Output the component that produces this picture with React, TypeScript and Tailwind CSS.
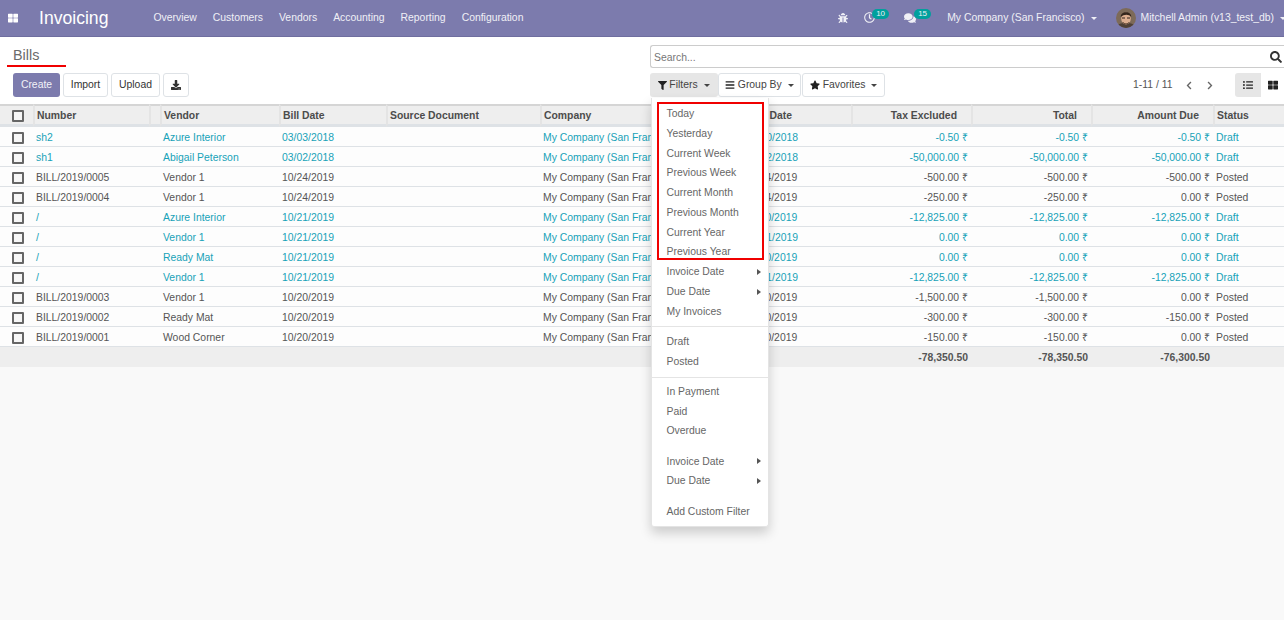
import React from "react";
import {
  FaThLarge,
  FaBug,
  FaRegClock,
  FaComments,
  FaSearch,
  FaDownload,
  FaFilter,
  FaBars,
  FaStar,
  FaChevronLeft,
  FaChevronRight,
  FaListUl,
} from "react-icons/fa";

const navItems = ["Overview", "Customers", "Vendors", "Accounting", "Reporting", "Configuration"];

type Bill = {
  number: string;
  vendor: string;
  billDate: string;
  dueDate: string;
  tax: string;
  total: string;
  due: string;
  status: string;
};

const bills: Bill[] = [
  { number: "sh2", vendor: "Azure Interior", billDate: "03/03/2018", dueDate: "03/30/2018", tax: "-0.50 ₹", total: "-0.50 ₹", due: "-0.50 ₹", status: "Draft" },
  { number: "sh1", vendor: "Abigail Peterson", billDate: "03/02/2018", dueDate: "04/02/2018", tax: "-50,000.00 ₹", total: "-50,000.00 ₹", due: "-50,000.00 ₹", status: "Draft" },
  { number: "BILL/2019/0005", vendor: "Vendor 1", billDate: "10/24/2019", dueDate: "11/24/2019", tax: "-500.00 ₹", total: "-500.00 ₹", due: "-500.00 ₹", status: "Posted" },
  { number: "BILL/2019/0004", vendor: "Vendor 1", billDate: "10/24/2019", dueDate: "11/24/2019", tax: "-250.00 ₹", total: "-250.00 ₹", due: "0.00 ₹", status: "Posted" },
  { number: "/", vendor: "Azure Interior", billDate: "10/21/2019", dueDate: "11/20/2019", tax: "-12,825.00 ₹", total: "-12,825.00 ₹", due: "-12,825.00 ₹", status: "Draft" },
  { number: "/", vendor: "Vendor 1", billDate: "10/21/2019", dueDate: "10/21/2019", tax: "0.00 ₹", total: "0.00 ₹", due: "0.00 ₹", status: "Draft" },
  { number: "/", vendor: "Ready Mat", billDate: "10/21/2019", dueDate: "11/20/2019", tax: "0.00 ₹", total: "0.00 ₹", due: "0.00 ₹", status: "Draft" },
  { number: "/", vendor: "Vendor 1", billDate: "10/21/2019", dueDate: "10/21/2019", tax: "-12,825.00 ₹", total: "-12,825.00 ₹", due: "-12,825.00 ₹", status: "Draft" },
  { number: "BILL/2019/0003", vendor: "Vendor 1", billDate: "10/20/2019", dueDate: "11/20/2019", tax: "-1,500.00 ₹", total: "-1,500.00 ₹", due: "0.00 ₹", status: "Posted" },
  { number: "BILL/2019/0002", vendor: "Ready Mat", billDate: "10/20/2019", dueDate: "11/20/2019", tax: "-300.00 ₹", total: "-300.00 ₹", due: "-150.00 ₹", status: "Posted" },
  { number: "BILL/2019/0001", vendor: "Wood Corner", billDate: "10/20/2019", dueDate: "11/20/2019", tax: "-150.00 ₹", total: "-150.00 ₹", due: "0.00 ₹", status: "Posted" },
];

const Caret = ({ className = "" }: { className?: string }) => (
  <span className={`inline-block w-0 h-0 border-x-[3.5px] border-x-transparent border-t-[3.5px] border-t-current ${className}`} />
);

const Avatar = () => (
  <svg width="20" height="20" viewBox="0 0 20 20" className="block rounded-full shrink-0">
    <rect width="20" height="20" fill="#7d6a58" />
    <path d="M0 20 C1 16 5 15 10 15 C15 15 19 16 20 20 Z" fill="#4f4036" />
    <ellipse cx="10" cy="10.5" rx="4.8" ry="6" fill="#dcae90" />
    <path d="M4.8 9 C4 2.5 16 2.5 15.2 9 C13 6 8 6 4.8 9 Z" fill="#33251c" />
    <path d="M6 10h3M11 10h3" stroke="#33251c" strokeWidth="1" />
    <path d="M6.5 14c2 2.5 5 2.5 7 0" stroke="#5a4030" strokeWidth="1" fill="none" />
  </svg>
);

const CheckBox = () => <span className="block w-[12px] h-[12px] border-2 border-[#666] bg-[#f6f6f6] rounded-[1px]" />;

const FilterItem = ({ label, sub }: { label: string; sub?: boolean }) => (
  <div className="h-[19.75px] pl-[14.5px] pr-[7px] flex items-center justify-between text-[#666]">
    <span>{label}</span>
    {sub && <span className="w-0 h-0 border-y-[3.5px] border-y-transparent border-l-[4px] border-l-[#555]" />}
  </div>
);

const headCell = "pt-[1px] border-t-2 border-t-[#d5d5d5] border-b-[3px] border-b-[#dee2e6]";

const TH = ({ children, right }: { children?: React.ReactNode; right?: boolean }) => (
  <th className={`${headCell} border-l-2 border-l-[#e4e4e4] font-bold text-[#4c4c4c] px-[2px] ${right ? "text-right pr-[14px]" : "text-left"}`}>
    {children}
  </th>
);

const TD = ({ children, right }: { children?: React.ReactNode; right?: boolean }) => (
  <td className={`pt-[2px] border-b border-[#dee2e6] px-[3px] whitespace-nowrap overflow-hidden ${right ? "text-right" : ""}`}>{children}</td>
);

export default function App() {
  return (
    <div className="h-[620px] w-[1284px] overflow-hidden bg-[#f9f9f9] font-['Liberation_Sans',Arial,sans-serif] text-[10.4px] text-[#555] flex flex-col">
      <header className="h-[37px] shrink-0 bg-[#7c7bad] border-b border-[#6f6e9f] flex items-center text-white">
        <FaThLarge className="ml-[8px] w-[10px] h-[10px]" />
        <span className="ml-[21px] text-[17.6px]">Invoicing</span>
        <nav className="ml-[45px] flex gap-[16px] text-[#f0f0f6]">
          {navItems.map((item) => (
            <span key={item}>{item}</span>
          ))}
        </nav>
        <div className="ml-auto flex items-center text-[#f0f0f6] whitespace-nowrap">
          <FaBug className="w-[10px] h-[10px]" />
          <span className="relative ml-[16px] w-[12px] h-[12px]">
            <FaRegClock className="w-[11px] h-[11px]" />
            <span className="absolute left-[8px] top-[-3px] h-[10px] px-[4px] rounded-full bg-[#00a09d] text-[8px] leading-[10px]">10</span>
          </span>
          <span className="relative ml-[28px] w-[12px] h-[12px]">
            <FaComments className="w-[12px] h-[12px]" />
            <span className="absolute left-[10px] top-[-3px] h-[10px] px-[4px] rounded-full bg-[#00a09d] text-[8px] leading-[10px]">15</span>
          </span>
          <span className="ml-[31px]">My Company (San Francisco)</span>
          <Caret className="ml-[6px]" />
          <span className="ml-[19px]">
            <Avatar />
          </span>
          <span className="ml-[5px]">Mitchell Admin (v13_test_db)</span>
          <Caret className="ml-[6px] mr-[-2px]" />
        </div>
      </header>

      <section className="h-[67px] shrink-0 bg-white grid grid-cols-[650px_1fr] relative">
        <div className="pl-[13px] flex flex-col">
          <h1 className="mt-[9px] h-[18px] text-[14.4px] leading-[18px] text-[#6b6b6b]">Bills</h1>
          <div className="mt-[9px] flex gap-[3px]">
            <button className="h-[24px] w-[47px] rounded-[3px] bg-[#7c7bad] text-[#f2f2f8]">Create</button>
            <button className="h-[24px] w-[45px] rounded-[3px] border border-[#dee2e6] bg-white text-[#333]">Import</button>
            <button className="h-[24px] w-[49px] rounded-[3px] border border-[#dee2e6] bg-white text-[#333]">Upload</button>
            <button className="h-[24px] w-[26px] rounded-[3px] border border-[#dee2e6] bg-white text-[#333] flex items-center justify-center">
              <FaDownload className="w-[10px] h-[10px]" />
            </button>
          </div>
        </div>
        <div className="flex flex-col">
          <div className="mt-[8px] h-[23px] border border-r-0 border-[#ccc] rounded-l-[3px] flex items-center justify-between pl-[3px] pr-[2px] text-[#777]">
            <span className="pt-[2px]">Search...</span>
            <FaSearch className="w-[12px] h-[12px] text-[#333]" />
          </div>
          <div className="mt-[5px] flex items-center whitespace-nowrap">
            <button className="h-[24px] w-[68px] rounded-[3px] bg-[#e6e6e6] text-[#444] flex items-center justify-center">
              <FaFilter className="w-[9px] h-[9px] text-[#222] mr-[2px]" />
              Filters
              <Caret className="ml-[6px]" />
            </button>
            <button className="h-[24px] w-[83px] rounded-[3px] border border-[#dee2e6] text-[#444] flex items-center justify-center">
              <FaBars className="w-[10px] h-[10px] text-[#222] mr-[2.5px]" />
              Group By
              <Caret className="ml-[6px]" />
            </button>
            <button className="ml-[1px] h-[24px] w-[83px] rounded-[3px] border border-[#dee2e6] text-[#444] flex items-center justify-center">
              <FaStar className="w-[10px] h-[10px] text-[#222] mr-[3px]" />
              Favorites
              <Caret className="ml-[6px]" />
            </button>
            <span className="ml-[248px] w-[39px]">1-11 / 11</span>
            <FaChevronLeft className="ml-[13px] w-[8px] h-[9px] text-[#666]" />
            <FaChevronRight className="ml-[13px] w-[8px] h-[9px] text-[#666]" />
            <div className="ml-[21px] flex h-[24px]">
              <span className="w-[26px] bg-[#e6e6e6] rounded-l-[3px] flex items-center justify-center">
                <FaListUl className="w-[10px] h-[10px] text-[#222]" />
              </span>
              <span className="w-[23px] flex items-center justify-center">
                <FaThLarge className="w-[10px] h-[10px] text-[#222]" />
              </span>
            </div>
          </div>
        </div>
      </section>

      <div className="relative flex-1">
        <table className="w-[1284px] table-fixed border-separate border-spacing-0">
          <colgroup>
            <col className="w-[33px]" />
            <col className="w-[116px]" />
            <col className="w-[11px]" />
            <col className="w-[119px]" />
            <col className="w-[107px]" />
            <col className="w-[154px]" />
            <col className="w-[203px]" />
            <col className="w-[108px]" />
            <col className="w-[120px]" />
            <col className="w-[120px]" />
            <col className="w-[122px]" />
            <col className="w-[71px]" />
          </colgroup>
          <thead>
            <tr className="h-[23px] bg-[#eeeeee]">
              <th className={`${headCell} pl-[12px]`}>
                <CheckBox />
              </th>
              <TH>Number</TH>
              <TH />
              <TH>Vendor</TH>
              <TH>Bill Date</TH>
              <TH>Source Document</TH>
              <TH>Company</TH>
              <TH>Due Date</TH>
              <TH right>Tax Excluded</TH>
              <TH right>Total</TH>
              <TH right>Amount Due</TH>
              <TH>Status</TH>
            </tr>
          </thead>
          <tbody>
            {bills.map((bill, i) => (
              <tr
                key={i}
                className={`h-[20px] bg-[#fdfdfd] ${bill.status === "Draft" ? "text-[#17a2b8]" : "text-[#555]"}`}
              >
                <td className="pt-[2px] border-b border-[#dee2e6] pl-[12px]">
                  <CheckBox />
                </td>
                <TD>{bill.number}</TD>
                <TD />
                <TD>{bill.vendor}</TD>
                <TD>{bill.billDate}</TD>
                <TD />
                <TD>My Company (San Francisco)</TD>
                <TD>{bill.dueDate}</TD>
                <TD right>{bill.tax}</TD>
                <TD right>{bill.total}</TD>
                <TD right>{bill.due}</TD>
                <TD>{bill.status}</TD>
              </tr>
            ))}
            <tr className="h-[20px] bg-[#eeeeee] font-bold">
              <td colSpan={8} />
              <td className="pt-[1px] px-[3px] text-right">-78,350.50</td>
              <td className="pt-[1px] px-[3px] text-right">-78,350.50</td>
              <td className="pt-[1px] px-[3px] text-right">-76,300.50</td>
              <td />
            </tr>
          </tbody>
        </table>

        <div className="absolute left-[651px] top-[-6px] w-[118px] bg-white rounded-b-[3px] border border-[#e4e4e4] border-t-0 shadow-[0_6px_12px_rgba(0,0,0,0.18)] pt-[6px] pb-[4.5px]">
          <div className="relative">
            {["Today", "Yesterday", "Current Week", "Previous Week", "Current Month", "Previous Month", "Current Year", "Previous Year"].map((label) => (
              <FilterItem key={label} label={label} />
            ))}
            <div className="absolute left-[5px] top-[-2px] w-[107px] h-[158px] border-2 border-[#f00000]" />
          </div>
          <FilterItem label="Invoice Date" sub />
          <FilterItem label="Due Date" sub />
          <FilterItem label="My Invoices" />
          <div className="my-[5px] border-t border-[#e4e4e4]" />
          <FilterItem label="Draft" />
          <FilterItem label="Posted" />
          <div className="mt-[5px] mb-[4px] border-t border-[#e4e4e4]" />
          <FilterItem label="In Payment" />
          <FilterItem label="Paid" />
          <FilterItem label="Overdue" />
          <div className="h-[10.5px]" />
          <FilterItem label="Invoice Date" sub />
          <FilterItem label="Due Date" sub />
          <div className="h-[11px]" />
          <FilterItem label="Add Custom Filter" />
        </div>
      </div>

      <div className="absolute left-[7px] top-[65px] w-[59px] h-[2px] bg-[#f00000]" />
    </div>
  );
}
